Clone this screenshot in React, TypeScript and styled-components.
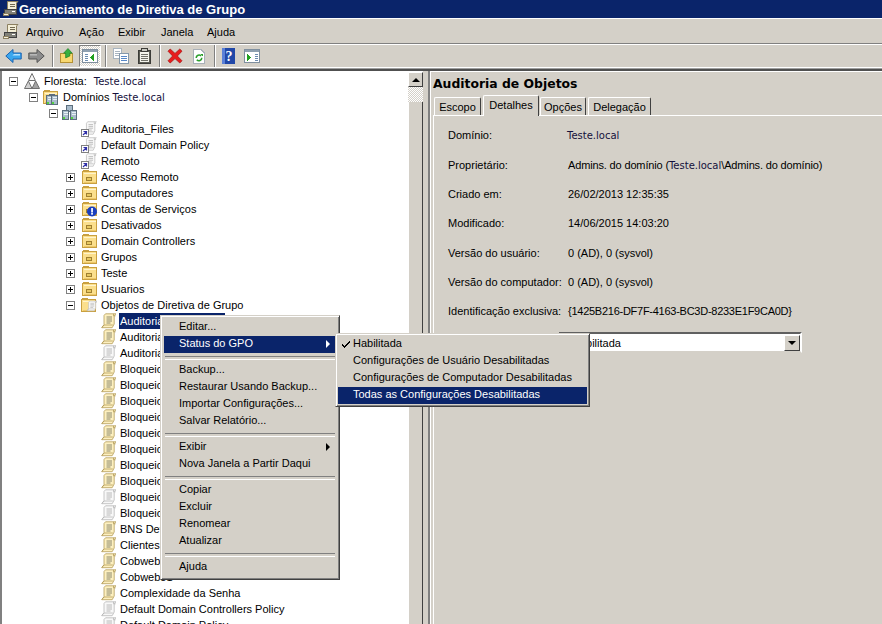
import React from "react";
import styled, { createGlobalStyle } from "styled-components";

const Global = createGlobalStyle`
  html, body { margin: 0; padding: 0; background: #d4d0c8; }
  * { box-sizing: border-box; }
`;

const UI = `"Liberation Sans", Arial, sans-serif`;
const NAVY = "#0a246a";

const Window = styled.div`
  position: relative;
  width: 882px;
  height: 624px;
  overflow: hidden;
  background: #d4d0c8;
  font: 11px ${UI};
  color: #000;
  display: flex;
  flex-direction: column;
`;
const TitleBar = styled.div`
  height: 18px;
  flex: none;
  background: ${NAVY};
  color: #fff;
  font: bold 13px ${UI};
  display: flex;
  align-items: center;
  gap: 0;
  padding-left: 3px;
`;
const TitleIcon = styled.span`
  width: 16px;
  display: flex;
`;
const Bar = styled.div<{ $h: number }>`
  height: ${(p) => p.$h}px;
  flex: none;
  display: flex;
  align-items: center;
  border-top: 1px solid #fff;
  border-bottom: 1px solid #808080;
`;
const MenuBar = styled(Bar)`
  padding: 2px 0 0 3px;
  box-shadow: inset 0 1px 0 #d4d0c8;
`;
const MenuBarIcon = styled.span`
  width: 23px;
  display: flex;
`;
const MenuBarItem = styled.span<{ $w: number }>`
  width: ${(p) => p.$w}px;
  flex: none;
`;
const ToolBar = styled(Bar)`
  border-bottom: none;
`;
const ToolSlot = styled.span<{ $w: number; $ml?: number; $pressed?: boolean }>`
  width: ${(p) => p.$w}px;
  margin-left: ${(p) => p.$ml ?? 0}px;
  height: 22px;
  flex: none;
  display: flex;
  align-items: center;
  justify-content: center;
  ${(p) =>
    p.$pressed
      ? `border: 1px solid; border-color: #808080 #fff #fff #808080;
         background: repeating-conic-gradient(#fff 0 25%, #d4d0c8 0 50%) 0 0 / 2px 2px;`
      : ""}
`;
const ToolSep = styled.span<{ $ml: number }>`
  width: 2px;
  height: 22px;
  flex: none;
  margin: 0 6px 0 ${(p) => p.$ml}px;
  border-left: 1px solid #808080;
  border-right: 1px solid #fff;
`;
const ToolRule = styled.div`
  height: 4px;
  flex: none;
  border-top: 1px solid #fff;
  border-bottom: 2px solid #505050;
  background: #a0a0a0;
`;
const Panes = styled.div`
  flex: 1;
  min-height: 0;
  display: flex;
`;
const LeftPane = styled.div`
  width: 423px;
  flex: none;
  display: flex;
  border-left: 2px solid #808080;
  background: #fff;
  overflow: hidden;
`;
const Tree = styled.div`
  flex: 1;
  padding-top: 2px;
  overflow: hidden;
`;
const Row = styled.div<{ $pad: number }>`
  height: 16px;
  display: flex;
  align-items: center;
  white-space: nowrap;
  padding-left: ${(p) => p.$pad}px;
`;
const ExpanderSlot = styled.span<{ $w: number }>`
  width: ${(p) => p.$w}px;
  flex: none;
  display: flex;
`;
const Expander = styled.span<{ $open: boolean }>`
  position: relative;
  width: 9px;
  height: 9px;
  border: 1px solid #808080;
  background: #fff;
  &::before {
    content: "";
    position: absolute;
    left: 1px;
    top: 3px;
    width: 5px;
    height: 1px;
    background: #000;
  }
  &::after {
    content: "";
    display: ${(p) => (p.$open ? "none" : "block")};
    position: absolute;
    left: 3px;
    top: 1px;
    width: 1px;
    height: 5px;
    background: #000;
  }
`;
const IconSlot = styled.span<{ $w: number }>`
  width: ${(p) => p.$w}px;
  flex: none;
  display: flex;
`;
const Label = styled.span<{ $w?: number; $sel?: boolean }>`
  display: block;
  height: 16px;
  line-height: 16px;
  padding-left: 1px;
  ${(p) => (p.$w ? `width: ${p.$w}px;` : "")}
  ${(p) => (p.$sel ? `background: ${NAVY}; color: #fff;` : "")}
`;
const Domain = styled.span<{ $gap: number }>`
  font: 10px "DejaVu Sans", sans-serif;
  color: #14103c;
  letter-spacing: 0;
  margin-left: ${(p) => p.$gap}px;
`;
const ScrollBar = styled.div`
  width: 15px;
  flex: none;
  display: flex;
  flex-direction: column;
  padding-top: 1px;
`;
const ScrollBtn = styled.div`
  height: 15px;
  flex: none;
  background: #d4d0c8;
  border: 1px solid;
  border-color: #fff #404040 #404040 #fff;
  display: flex;
  align-items: center;
  justify-content: center;
  &::before {
    content: "";
    border: 4px solid transparent;
    border-top: 0;
    border-bottom-color: #000;
  }
`;
const ScrollTrack = styled.div`
  height: 15px;
  flex: none;
  background: repeating-conic-gradient(#fff 0 25%, #d4d0c8 0 50%) 0 0 / 2px 2px;
`;
const ScrollThumb = styled.div`
  flex: 1;
  background: #d4d0c8;
  border-left: 1px solid #fff;
  border-right: 1px solid #404040;
`;
const Splitter = styled.div`
  width: 5px;
  flex: none;
`;
const RightPane = styled.div`
  flex: 1;
  min-width: 0;
  border-left: 2px solid #808080;
  box-shadow: inset 1px 1px 0 #fff;
  display: flex;
  flex-direction: column;
`;
const PaneTitle = styled.div`
  height: 24px;
  flex: none;
  padding: 5px 0 0 3px;
  font: bold 12.4px "DejaVu Sans", sans-serif;
  white-space: nowrap;
`;
const Tabs = styled.div`
  height: 20px;
  flex: none;
  display: flex;
  align-items: flex-end;
  padding-left: 4px;
`;
const Tab = styled.div<{ $w: number; $active?: boolean }>`
  width: ${(p) => p.$w}px;
  height: ${(p) => (p.$active ? 21 : 18)}px;
  margin-right: ${(p) => (p.$active ? 1 : 2)}px;
  margin-bottom: ${(p) => (p.$active ? -1 : 0)}px;
  position: relative;
  z-index: ${(p) => (p.$active ? 1 : 0)};
  background: #d4d0c8;
  border: 1px solid;
  border-bottom: none;
  border-color: #fff #404040 #d4d0c8 #fff;
  border-radius: 2px 2px 0 0;
  text-align: center;
  line-height: 18px;
`;
const TabBody = styled.div`
  flex: 1;
  min-height: 0;
  margin-left: 3px;
  border-top: 1px solid #fff;
  border-left: 1px solid #fff;
  padding: 4.6px 0 0 14px;
`;
const DetailRow = styled.div`
  height: 29.33px;
  display: grid;
  grid-template-columns: 120px 1fr;
  align-items: center;
  white-space: nowrap;
`;
const Tight = styled.span<{ $s: number }>`
  letter-spacing: ${(p) => p.$s}px;
`;
const Combo = styled.div`
  width: 243px;
  height: 21px;
  margin: 6.5px 0 0 111px;
  background: #fff;
  border: 2px solid;
  border-color: #606060 #fff #d4d0c8 #606060;
  display: flex;
  align-items: center;
  justify-content: space-between;
  padding-left: 11px;
`;
const ComboBtn = styled.span`
  width: 16px;
  height: 16px;
  background: #d4d0c8;
  border: 1px solid;
  border-color: #fff #404040 #404040 #fff;
  display: flex;
  align-items: center;
  justify-content: center;
  &::before {
    content: "";
    border: 4px solid transparent;
    border-bottom: 0;
    border-top-color: #000;
  }
`;
const Popup = styled.div<{ $l: number; $t: number; $w: number; $p: number }>`
  position: absolute;
  left: ${(p) => p.$l}px;
  top: ${(p) => p.$t}px;
  width: ${(p) => p.$w}px;
  padding: ${(p) => p.$p}px;
  background: #d4d0c8;
  border-top: 1px solid #d4d0c8;
  border-left: 1px solid #d4d0c8;
  border-right: 1px solid #404040;
  border-bottom: 1px solid #404040;
  box-shadow: inset 1px 1px 0 #fff, inset -1px -1px 0 #808080;
`;
const MenuItem = styled.div<{ $sel?: boolean; $pad: number }>`
  height: 17px;
  line-height: 15px;
  white-space: nowrap;
  position: relative;
  padding-left: ${(p) => p.$pad}px;
  ${(p) => (p.$sel ? `background: ${NAVY}; color: #fff;` : "")}
`;
const MenuArrow = styled.span<{ $light?: boolean }>`
  position: absolute;
  right: 6px;
  top: 4px;
  border: 4px solid transparent;
  border-right: 0;
  border-left-color: ${(p) => (p.$light ? "#fff" : "#000")};
`;
const MenuCheck = styled.span`
  position: absolute;
  left: 4px;
  top: 5px;
  display: flex;
`;
const MenuSep = styled.div`
  height: 9px;
  padding: 3px 1px 0;
  &::before {
    content: "";
    display: block;
    height: 2px;
    border-top: 1px solid #808080;
    border-bottom: 1px solid #fff;
  }
`;

const Svg: React.FC<{ w?: number; h?: number; children: React.ReactNode }> = ({ w = 16, h = 16, children }) => (
  <svg width={w} height={h} viewBox={`0 0 ${w} ${h}`} shapeRendering="crispEdges">{children}</svg>
);

const ScrollShape: React.FC<{ gray?: boolean }> = ({ gray }) => {
  const f = gray ? "#f8f8f8" : "#fdf0c0";
  const s = gray ? "#b8b8b8" : "#b49c58";
  const l = gray ? "#a8a8a8" : "#70705c";
  return (
    <g shapeRendering="geometricPrecision" strokeWidth=".8">
      <path d="M4.5 .8H15l-1.8 1.8V11l-2 3.7H.8L3 11.8V2.5z" fill={f} stroke={s} />
      <path d="M12.5 .8v2h2.2" fill="none" stroke={s} />
      <path d="M.8 14.7q1-2.7 3-2.7h8" fill="none" stroke={s} />
      <path d="M5.5 4h5.5M5.5 6h5.5M5.5 8h5.5M5.5 10h4" stroke={l} fill="none" />
    </g>
  );
};
const GpoIcon: React.FC<{ gray?: boolean }> = ({ gray }) => <Svg><ScrollShape gray={gray} /></Svg>;
const LinkIcon = () => (
  <Svg>
    <g transform="translate(3 0) scale(.82 .9)"><ScrollShape gray /></g>
    <rect x="0.5" y="8.5" width="7" height="7" fill="#fff" stroke="#808080" />
    <path d="M2 14l3-3M2.5 10.5H5.5V13.5" stroke="#3030a8" fill="none" strokeWidth="1.2" shapeRendering="geometricPrecision" />
  </Svg>
);
const FolderShape = () => (
  <g>
    <path d="M1.5 3.5V1.5H6.5V3.5" fill="#fbe9ac" stroke="#c9a040" />
    <rect x="0.5" y="2.5" width="14" height="12" fill="#fbdf8c" stroke="#c9a040" />
    <rect x="1.5" y="3.5" width="12" height="1" fill="#fff4cc" />
    <rect x="1.5" y="12.5" width="12" height="1" fill="#eec868" />
  </g>
);
const OuIcon: React.FC<{ warn?: boolean }> = ({ warn }) => (
  <Svg>
    <FolderShape />
    <rect x="4.5" y="8.5" width="5" height="3" fill="#e8c860" stroke="#a08030" />
    <rect x="6" y="6" width="2" height="2" fill="#f4dc90" />
    {warn && (
      <g shapeRendering="geometricPrecision">
        <circle cx="10" cy="10.5" r="5" fill="#1a3fc0" />
        <rect x="9.2" y="7" width="1.7" height="4.5" fill="#fff" />
        <rect x="9.2" y="12" width="1.7" height="1.7" fill="#fff" />
      </g>
    )}
  </Svg>
);
const GpoFolderIcon = () => (
  <Svg>
    <FolderShape />
    <g transform="translate(5.5 3.5) scale(0.7)"><ScrollShape gray /></g>
  </Svg>
);
const Server: React.FC<{ x: number; y: number }> = ({ x, y }) => (
  <g>
    <rect x={x + 0.5} y={y + 0.5} width="6" height="9" fill="#a9bccb" stroke="#5c6e7d" />
    <rect x={x + 1.5} y={y + 2} width="4" height="1" fill="#e8f0f4" />
    <rect x={x + 1.5} y={y + 4} width="4" height="1" fill="#e8f0f4" />
    <rect x={x + 1} y={y + 7} width="2" height="2" fill="#52d040" />
  </g>
);
const DomainIcon = () => (
  <Svg>
    <rect x="4.5" y="0.5" width="6" height="6" fill="#a9bccb" stroke="#5c6e7d" />
    <Server x={0} y={5} />
    <Server x={8} y={5} />
  </Svg>
);
const DomainsFolderIcon = () => (
  <Svg>
    <FolderShape />
    <rect x="6.5" y="5.5" width="5" height="4" fill="#a9bccb" stroke="#5c6e7d" />
    <g transform="translate(3 6)"><Server x={0} y={0} /></g>
    <g transform="translate(8 6)"><Server x={0} y={0} /></g>
  </Svg>
);
const ForestIcon = () => (
  <Svg>
    <g shapeRendering="geometricPrecision" stroke="#707070">
      <path d="M8 .5L11.4 7.5H4.6z" fill="#f6f6f6" />
      <path d="M4.4 8L8 15.5H.5z" fill="#d0d0d0" />
      <path d="M11.6 8L15.5 15.5H8z" fill="#a4a4a4" />
    </g>
  </Svg>
);
const BackIcon = () => (
  <Svg w={17} h={16}>
    <path shapeRendering="geometricPrecision" d="M.8 8L8 1.5V5h8.2v6H8v3.5z" fill="#3aa6ee" stroke="#1a62b0" />
    <path shapeRendering="geometricPrecision" d="M9 6h6v1.6H7.5z" fill="#b4e2ff" />
  </Svg>
);
const ForwardIcon = () => (
  <Svg w={17} h={16}>
    <path shapeRendering="geometricPrecision" d="M16.2 8L9 1.5V5H.8v6H9v3.5z" fill="#8c8c8c" stroke="#555" />
    <path shapeRendering="geometricPrecision" d="M2 6h7v1.6H2z" fill="#b8b8b8" />
  </Svg>
);
const UpIcon = () => (
  <Svg>
    <rect x="0.5" y="5.5" width="13" height="9.5" fill="#f8d870" stroke="#b08c30" />
    <path shapeRendering="geometricPrecision" d="M4 11V6H1.8L6.5 1l4.5 5H8.5v3z" fill="#36b040" stroke="#1a7a20" strokeWidth=".7" transform="translate(2 -1)" />
  </Svg>
);
const TreeToggleIcon = () => (
  <Svg w={16} h={14}>
    <rect x="0.5" y="0.5" width="15" height="13" fill="#fff" stroke="#7f8f9f" />
    <rect x="1" y="1" width="14" height="2" fill="#8fa0b0" />
    <path d="M3 5h3M3 7h3M3 9h3M3 11h3" stroke="#6c8cb0" />
    <path d="M12 5v7l-4-3.5z" fill="#20a020" />
  </Svg>
);
const ViewIcon = () => (
  <Svg w={16} h={14}>
    <rect x="0.5" y="0.5" width="15" height="13" fill="#fff" stroke="#7f8f9f" />
    <rect x="1" y="1" width="14" height="2" fill="#8fa0b0" />
    <path d="M11 5h3M11 7h3M11 9h3M11 11h3" stroke="#6c8cb0" />
    <path d="M3 5v7l4-3.5z" fill="#20a020" />
  </Svg>
);
const CopyIcon = () => (
  <Svg>
    <rect x="0.5" y="0.5" width="8" height="10" fill="#fff" stroke="#a8b4c0" />
    <path d="M2 3h5M2 5h5M2 7h4" stroke="#a8b4c0" />
    <rect x="6.5" y="5.5" width="9" height="10" fill="#fff" stroke="#8498ac" />
    <path d="M8 8h6M8 10h6M8 12h6" stroke="#5888c8" />
  </Svg>
);
const PasteIcon = () => (
  <Svg w={13} h={16}>
    <rect x="0.5" y="2.5" width="12" height="13" fill="#5c5c54" stroke="#3c3c38" />
    <rect x="2" y="4" width="9" height="10" fill="#f4f4ec" />
    <rect x="3.5" y="0.5" width="6" height="3" fill="#c8c8c0" stroke="#3c3c38" />
    <path d="M3 6h7M3 8h7M3 10h7M3 12h7" stroke="#707068" />
  </Svg>
);
const DeleteIcon = () => (
  <Svg>
    <path shapeRendering="geometricPrecision" d="M1 3.2L3.2 1 8 5.4 12.8 1 15 3.2 10.4 8 15 12.8 12.8 15 8 10.6 3.2 15 1 12.8 5.6 8z" fill="#e81c1c" stroke="#a01010" strokeWidth=".7" />
  </Svg>
);
const RefreshIcon = () => (
  <Svg w={12} h={15}>
    <path d="M.5.5H8L11.5 4v10.5H.5z" fill="#fff" stroke="#a8b0b8" />
    <path shapeRendering="geometricPrecision" d="M3.2 9a2.9 2.9 0 0 1 5-2M8.8 8.8a2.9 2.9 0 0 1-5 2" fill="none" stroke="#2ca02c" strokeWidth="1.6" />
    <path d="M7 4.5h3v3z" fill="#2ca02c" />
  </Svg>
);
const HelpIcon = () => (
  <svg width="13" height="16" viewBox="0 0 13 16">
    <rect width="13" height="16" fill="#2148a8" />
    <rect x="0" y="0" width="3" height="16" fill="#5a80d8" />
    <text x="7" y="13" fontFamily="Liberation Serif, serif" fontWeight="bold" fontSize="14" textAnchor="middle" fill="#fff">?</text>
  </svg>
);
const ConsoleIcon = () => (
  <Svg>
    <path shapeRendering="geometricPrecision" d="M4.5 .5H15L13.5 2v8.5l-1 1H2.5l2-2z" fill="#f4efd8" stroke="#8c8060" />
    <path d="M6.5 3h5M6.5 5h5" stroke="#706850" />
    <rect x="1.5" y="8.5" width="12" height="5" fill="#808078" stroke="#404040" />
    <rect x="0.5" y="12.5" width="5" height="2" fill="#f4efd8" stroke="#8c8060" />
    <rect x="9" y="10" width="3" height="1" fill="#fff" />
  </Svg>
);
const CheckIcon = () => (
  <Svg w={8} h={7}>
    <path d="M0 3h1v1h1v1h1V4h1V3h1V2h1V1h1V0h1v2H7v1H6v1H5v1H4v1H3v1H2V6H1V5H0z" fill="currentColor" />
  </Svg>
);

type RowData = { box?: boolean | "open"; pad: number; exp: number; iconW: number; icon: React.ReactNode; text: string; domain?: [string, number]; sel?: boolean };

const level3 = (text: string, icon: React.ReactNode): RowData => ({ box: true, pad: 64, exp: 16, iconW: 18, icon, text });
const link = (text: string): RowData => ({ pad: 64, exp: 15, iconW: 19, icon: <LinkIcon />, text });
const gpo = (text: string, gray?: boolean, sel?: boolean): RowData => ({ pad: 99, exp: 0, iconW: 18, icon: <GpoIcon gray={gray} />, text, sel });

const rows: RowData[] = [
  { box: "open", pad: 7, exp: 15, iconW: 19, icon: <ForestIcon />, text: "Floresta:", domain: ["Teste.local", 7] },
  { box: "open", pad: 27, exp: 14, iconW: 19, icon: <DomainsFolderIcon />, text: "Domínios", domain: ["Teste.local", 3] },
  { box: "open", pad: 47, exp: 13, iconW: 19, icon: <DomainIcon />, text: "" },
  link("Auditoria_Files"),
  link("Default Domain Policy"),
  link("Remoto"),
  level3("Acesso Remoto", <OuIcon />),
  level3("Computadores", <OuIcon />),
  level3("Contas de Serviços", <OuIcon warn />),
  level3("Desativados", <OuIcon />),
  level3("Domain Controllers", <OuIcon />),
  level3("Grupos", <OuIcon />),
  level3("Teste", <OuIcon />),
  level3("Usuarios", <OuIcon />),
  { box: "open", pad: 64, exp: 15, iconW: 19, icon: <GpoFolderIcon />, text: "Objetos de Diretiva de Grupo" },
  gpo("Auditoria de Objetos", false, true),
  gpo("Auditoria"),
  gpo("Auditoria", true),
  gpo("Bloqueio"), gpo("Bloqueio"), gpo("Bloqueio"), gpo("Bloqueio"), gpo("Bloqueio"),
  gpo("Bloqueio"), gpo("Bloqueio"), gpo("Bloqueio"), gpo("Bloqueio", true), gpo("Bloqueio", true),
  gpo("BNS Default"),
  gpo("Clientes"),
  gpo("Cobweb"),
  gpo("Cobweb51"),
  gpo("Complexidade da Senha"),
  gpo("Default Domain Controllers Policy", true),
  gpo("Default Domain Policy", true),
];

const details: [string, React.ReactNode][] = [
  ["Domínio:", <Domain $gap={-1}>Teste.local</Domain>],
  ["Proprietário:", <Tight $s={-0.15}>Admins. do domínio (<Domain $gap={0}>Teste.local</Domain>\Admins. do domínio)</Tight>],
  ["Criado em:", "26/02/2013 12:35:35"],
  ["Modificado:", "14/06/2015 14:03:20"],
  ["Versão do usuário:", "0 (AD), 0 (sysvol)"],
  ["Versão do computador:", "0 (AD), 0 (sysvol)"],
  ["Identificação exclusiva:", <Tight $s={-0.26}>{"{1425B216-DF7F-4163-BC3D-8233E1F9CA0D}"}</Tight>],
];

const contextGroups: { text: string; sel?: boolean; arrow?: boolean }[][] = [
  [{ text: "Editar..." }, { text: "Status do GPO", sel: true, arrow: true }],
  [{ text: "Backup..." }, { text: "Restaurar Usando Backup..." }, { text: "Importar Configurações..." }, { text: "Salvar Relatório..." }],
  [{ text: "Exibir", arrow: true }, { text: "Nova Janela a Partir Daqui" }],
  [{ text: "Copiar" }, { text: "Excluir" }, { text: "Renomear" }, { text: "Atualizar" }],
  [{ text: "Ajuda" }],
];

const menus: [string, number][] = [["Arquivo", 53], ["Ação", 39], ["Exibir", 43], ["Janela", 46], ["Ajuda", 40]];

export default function App() {
  return (
    <Window>
      <Global />
      <TitleBar><TitleIcon><ConsoleIcon /></TitleIcon>Gerenciamento de Diretiva de Grupo</TitleBar>
      <MenuBar $h={26}>
        <MenuBarIcon><ConsoleIcon /></MenuBarIcon>
        {menus.map(([m, w]) => <MenuBarItem key={m} $w={w}>{m}</MenuBarItem>)}
      </MenuBar>
      <ToolBar $h={23}>
        <ToolSlot $w={17} $ml={5}><BackIcon /></ToolSlot>
        <ToolSlot $w={17} $ml={6}><ForwardIcon /></ToolSlot>
        <ToolSep $ml={7} />
        <ToolSlot $w={15}><UpIcon /></ToolSlot>
        <ToolSlot $w={22} $ml={4} $pressed><TreeToggleIcon /></ToolSlot>
        <ToolSep $ml={4} />
        <ToolSlot $w={16}><CopyIcon /></ToolSlot>
        <ToolSlot $w={13} $ml={9}><PasteIcon /></ToolSlot>
        <ToolSep $ml={8} />
        <ToolSlot $w={16}><DeleteIcon /></ToolSlot>
        <ToolSlot $w={12} $ml={10}><RefreshIcon /></ToolSlot>
        <ToolSep $ml={9} />
        <ToolSlot $w={13}><HelpIcon /></ToolSlot>
        <ToolSlot $w={16} $ml={9}><ViewIcon /></ToolSlot>
      </ToolBar>
      <ToolRule />
      <Panes>
        <LeftPane>
          <Tree>
            {rows.map((r, i) => (
              <Row key={i} $pad={r.pad}>
                {r.exp > 0 && <ExpanderSlot $w={r.exp}>{r.box && <Expander $open={r.box === "open"} />}</ExpanderSlot>}
                <IconSlot $w={r.iconW}>{r.icon}</IconSlot>
                <Label $sel={r.sel} $w={r.sel ? 106 : undefined}>{r.text}</Label>
                {r.domain && <Domain $gap={r.domain[1]}>{r.domain[0]}</Domain>}
              </Row>
            ))}
          </Tree>
          <ScrollBar>
            <ScrollBtn />
            <ScrollTrack />
            <ScrollThumb />
          </ScrollBar>
        </LeftPane>
        <Splitter />
        <RightPane>
          <PaneTitle>Auditoria de Objetos</PaneTitle>
          <Tabs>
            <Tab $w={47}>Escopo</Tab>
            <Tab $w={56} $active>Detalhes</Tab>
            <Tab $w={46}>Opções</Tab>
            <Tab $w={63}>Delegação</Tab>
          </Tabs>
          <TabBody>
            {details.map(([k, v]) => (
              <DetailRow key={k}><span>{k}</span><span>{v}</span></DetailRow>
            ))}
            <Combo>Habilitada<ComboBtn /></Combo>
          </TabBody>
        </RightPane>
      </Panes>
      <Popup $l={160} $t={315} $w={180} $p={3}>
        {contextGroups.map((g, i) => (
          <React.Fragment key={i}>
            {i > 0 && <MenuSep />}
            {g.map((it) => (
              <MenuItem key={it.text} $pad={15} $sel={it.sel}>
                {it.text}
                {it.arrow && <MenuArrow $light={it.sel} />}
              </MenuItem>
            ))}
          </React.Fragment>
        ))}
      </Popup>
      <Popup $l={335} $t={333} $w={255} $p={2}>
        <MenuItem $pad={15}><MenuCheck><CheckIcon /></MenuCheck>Habilitada</MenuItem>
        <MenuItem $pad={15}>Configurações de Usuário Desabilitadas</MenuItem>
        <MenuItem $pad={15}>Configurações de Computador Desabilitadas</MenuItem>
        <MenuItem $pad={15} $sel>Todas as Configurações Desabilitadas</MenuItem>
      </Popup>
    </Window>
  );
}
